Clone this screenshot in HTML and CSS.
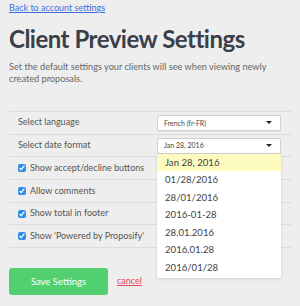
FILE: index.html
```html
<!doctype html>
<html lang="en">

<head>
    <meta charset="UTF-8" />
    <meta name="viewport" content="width=device-width, initial-scale=1.0" />
    <title>Client Preview Settings</title>
    <link rel="stylesheet" href="styles.css">
</head>

<body>
    <a href="#" class="back-link">Back to account settings</a>
    <h1>Client Preview Settings</h1>
    <p class="intro">Set the default settings your clients will see when viewing newly created proposals.</p>

    <div class="settings">
        <div class="row">
            <span class="label">Select language</span>
            <div class="select">
                <span>French (fr-FR)</span>
                <span class="caret"></span>
            </div>
        </div>
        <div class="row">
            <span class="label">Select date format</span>
            <div class="select open">
                <span>Jan 28, 2016</span>
                <span class="caret"></span>
                <ul class="options">
                    <li class="active">Jan 28, 2016</li>
                    <li>01/28/2016</li>
                    <li>28/01/2016</li>
                    <li>2016-01-28</li>
                    <li>28.01.2016</li>
                    <li>2016.01.28</li>
                    <li>2016/01/28</li>
                </ul>
            </div>
        </div>
        <div class="row">
            <label class="check"><input type="checkbox" checked> Show accept/decline buttons</label>
        </div>
        <div class="row">
            <label class="check"><input type="checkbox" checked> Allow comments</label>
        </div>
        <div class="row">
            <label class="check"><input type="checkbox" checked> Show total in footer</label>
        </div>
        <div class="row">
            <label class="check"><input type="checkbox" checked> Show 'Powered by Proposify'</label>
        </div>
    </div>

    <div class="actions">
        <button class="save">Save Settings</button>
        <a href="#" class="cancel">cancel</a>
    </div>
</body>

</html>
```

FILE: styles.css
```css
body {
    margin: 0;
    padding: 2px 9px 0 9px;
    background: #eeeeee;
    font-family: Lato, "Open Sans", sans-serif;
    color: #555;
    line-height: 1.2;
}

.back-link {
    display: block;
    width: fit-content;
    font-size: 9px;
    color: #3b6fe0;
    line-height: 11px;
}

h1 {
    margin: 12px 0 0 0;
    font-size: 24px;
    font-weight: 700;
    color: #3b3f4a;
    line-height: 28px;
    letter-spacing: -0.5px;
}

.intro {
    margin: 8px 0 0 0;
    font-size: 9.2px;
    line-height: 12px;
    color: #666;
}

.settings {
    margin-top: 26px;
    border-top: 1px solid #dcdcdc;
}

.row {
    display: flex;
    align-items: center;
    height: 21.7px;
    border-bottom: 1px solid #dcdcdc;
    padding-left: 9px;
}

.label {
    font-size: 9px;
    color: #555;
    width: 139px;
}

.select {
    position: relative;
    width: 124px;
    height: 16px;
    box-sizing: border-box;
    background: #fff;
    border: 1px solid #d0d0d0;
    border-radius: 2px;
    box-shadow: 0 1px 1px rgba(0, 0, 0, 0.06);
    display: flex;
    align-items: center;
    justify-content: space-between;
    padding: 0 8px 0 6px;
    font-size: 7px;
    color: #444;
}

.caret {
    width: 0;
    height: 0;
    border-left: 3px solid transparent;
    border-right: 3px solid transparent;
    border-top: 3px solid #222;
}

.options {
    position: absolute;
    top: 15px;
    left: -1px;
    width: 124px;
    margin: 0;
    padding: 0 0 2px 0;
    list-style: none;
    background: #fff;
    box-shadow: 0 1px 3px rgba(0, 0, 0, 0.12);
    z-index: 2;
}

.options li {
    height: 17.5px;
    line-height: 17.5px;
    padding-left: 8px;
    font-size: 9.6px;
    color: #444;
}

.options li.active {
    background: #fdfbc0;
}

.check {
    display: flex;
    align-items: center;
    font-size: 9px;
    color: #555;
}

.check input {
    margin: 0 4px 0 0;
    width: 8px;
    height: 8px;
    accent-color: #2f8de4;
}

.actions {
    display: flex;
    align-items: center;
    margin-top: 20px;
}

.save {
    width: 99px;
    height: 27px;
    border: none;
    border-radius: 3px;
    background: #52cf6f;
    color: #fff;
    font-family: Lato, "Open Sans", sans-serif;
    font-size: 9.5px;
    cursor: pointer;
}

.cancel {
    margin-left: 9px;
    font-size: 9px;
    color: #e8485a;
}
```
